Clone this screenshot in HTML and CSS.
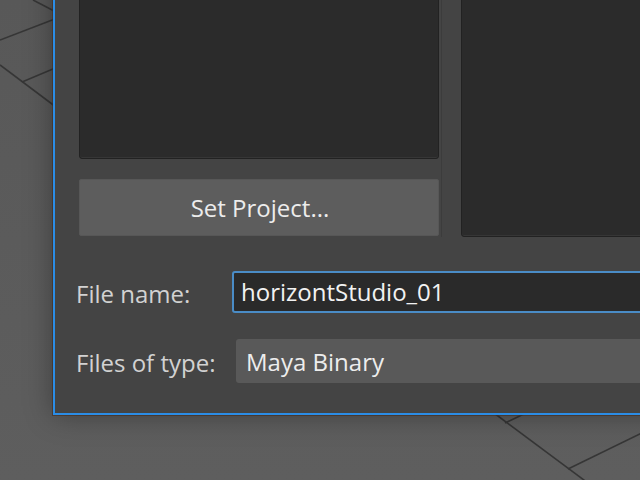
FILE: index.html
```html
<!DOCTYPE html>
<html lang="en">
<head>
    <meta charset="UTF-8">
    <meta name="viewport" content="width=device-width, initial-scale=1.0">
    <title>Save As</title>
    <link rel="stylesheet" href="styles.css">
</head>
<body>
    <div class="viewport">
        <svg class="grid" width="640" height="480" viewBox="0 0 640 480">
            <line x1="33" y1="0" x2="60" y2="14"/>
            <line x1="0" y1="40" x2="60" y2="17"/>
            <line x1="0" y1="65" x2="60" y2="110"/>
            <line x1="22" y1="82" x2="60" y2="66"/>
            <line x1="490" y1="410" x2="600" y2="492"/>
            <line x1="505" y1="423" x2="530" y2="411"/>
            <line x1="568" y1="469" x2="650" y2="429"/>
        </svg>

        <div class="dialog">
            <div class="panes">
                <div class="left-col">
                    <div class="pane list-pane"></div>
                    <button class="set-project">Set Project...</button>
                </div>
                <div class="splitter"></div>
                <div class="pane preview-pane"></div>
            </div>

            <div class="form">
                <label class="form-label" for="fname">File name:</label>
                <input class="name-input" id="fname" type="text" value="horizontStudio_01">
                <span class="form-label">Files of type:</span>
                <div class="type-combo">Maya Binary</div>
            </div>
        </div>
    </div>
</body>
</html>
```

FILE: styles.css
```css
body {
    margin: 0;
    background-color: #5b5b5b;
    font-family: "Open Sans", "Noto Sans", sans-serif;
    overflow: hidden;
}

.viewport {
    position: relative;
    width: 640px;
    height: 480px;
    overflow: hidden;
    background: linear-gradient(#585858, #5e5e5e);
}

.grid {
    position: absolute;
    top: 0;
    left: 0;
}

.grid line {
    stroke: #363636;
    stroke-width: 1.6;
}

/* window floating over the viewport, cut off at top and right */
.dialog {
    position: absolute;
    left: 53px;
    top: -40px;
    width: 640px;
    padding: 0 0 30px 24px;
    background-color: #444444;
    border: 2px solid #2b8de6;
    box-shadow: 0 0 0 1px rgba(70, 45, 30, 0.6), 0 0 26px rgba(0, 0, 0, 0.35);
}

.panes {
    display: flex;
}

.left-col {
    display: flex;
    flex-direction: column;
    gap: 20px;
    width: 360px;
}

.pane {
    background-color: #2b2b2b;
    border: 1px solid #222222;
    border-radius: 3px;
    box-shadow: inset 0 -1px 0 #363636;
}

.list-pane {
    height: 195px;
}

.splitter {
    width: 1px;
    margin: 0 19px 0 2px;
    background-color: #3c3c3c;
}

.preview-pane {
    flex: 1;
    height: 273px;
}

.set-project {
    height: 57px;
    padding: 0 0 1px 2px;
    font-family: inherit;
    font-size: 24px;
    color: #ececec;
    background-color: #5d5d5d;
    border: 1px solid #575757;
    border-radius: 2px;
}

.form {
    display: grid;
    grid-template-columns: 156px 1fr;
    row-gap: 26px;
    align-items: center;
    margin-top: 34px;
    margin-left: -3px;
}

.form-label {
    font-size: 24px;
    color: #d2d2d2;
    padding-top: 2px;
}

.name-input {
    height: 42px;
    box-sizing: border-box;
    padding: 0 0 1px 7px;
    font-family: inherit;
    font-size: 24px;
    color: #f2f2f2;
    background-color: #2a2a2a;
    border: 2px solid #4a8cc6;
    border-radius: 3px;
    outline: none;
}

.type-combo {
    height: 44px;
    margin-left: 4px;
    padding: 0 0 0 10px;
    box-sizing: border-box;
    display: flex;
    align-items: center;
    font-size: 24px;
    color: #ededed;
    background-color: #595959;
    border-radius: 3px;
}
```
